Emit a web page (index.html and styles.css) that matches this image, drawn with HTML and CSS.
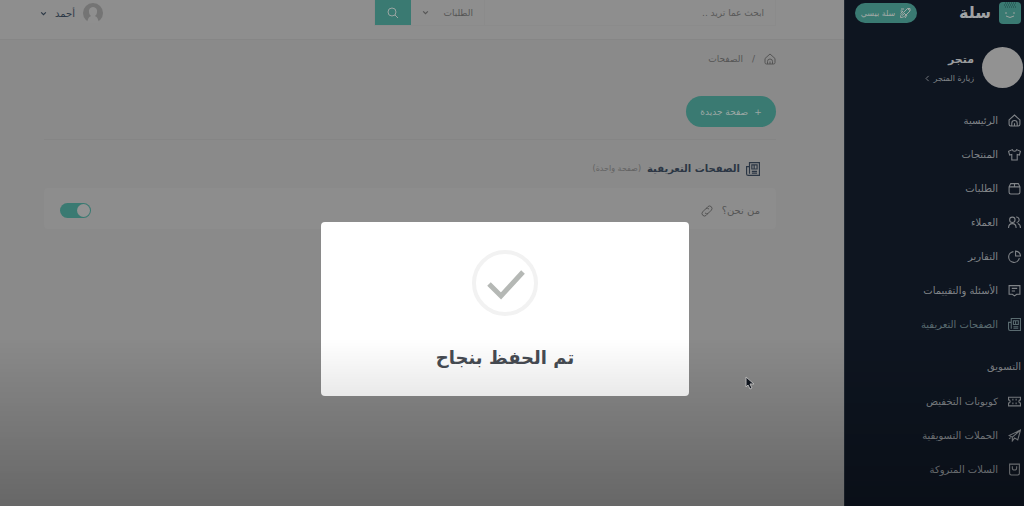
FILE: index.html
```
<!DOCTYPE html>
<html lang="ar" dir="rtl">
<head>
    <meta charset="UTF-8">
    <meta name="viewport" content="width=device-width, initial-scale=1.0">
    <title>الصفحات التعريفية</title>
    <link rel="stylesheet" href="styles.css">
</head>
<body>
    <!-- Shared icons -->
    <svg class="sprite" aria-hidden="true">
        <symbol id="home" viewBox="0 0 24 24"><path d="M2 11 12 2l10 9v8a3 3 0 0 1-3 3H5a3 3 0 0 1-3-3zM7 22v-5a5 5 0 0 1 10 0v5M12 17v5"/></symbol>
        <symbol id="pages" viewBox="0 0 24 24"><path d="M6 1h17v22H4a3 3 0 0 1-3-3V8h5zM6 8v12M10 5h9v7h-9zM10 16h9M10 19h9M14 5v7"/></symbol>
        <symbol id="chevron" viewBox="0 0 24 24"><path d="m4 8 8 8 8-8"/></symbol>
    </svg>

    <aside class="sidebar">
        <div class="brand">
            <svg class="brand-icon" viewBox="0 0 22 22"><rect width="22" height="22" rx="4" fill="#3a7a72"/><path d="M6 1h11M5 3h11M6 5h11" stroke="#1c4a48" stroke-width="1" stroke-dasharray="1 1"/><path d="M6 11h2M14 11h2M7 14q4 3 8 0" fill="none" stroke="#9aa39f" stroke-width="1"/></svg>
            <span class="brand-name">سلة</span>
            <button class="plan" type="button">
                <svg class="plan-icon" viewBox="0 0 24 24"><path d="M3 21c0-6 3-8 6-10l8-8h5v5l-8 8c-3 3-6 5-11 5zM9 11l5 5M3 13l5-5M16 16l-4 6M17 3l4 4M6 17l4-3M4 4h6M3 8h4"/></svg>
                سلة بيسي
            </button>
        </div>
        <div class="store">
            <div class="store-logo"></div>
            <div>
                <div class="store-name">متجر</div>
                <a class="store-link" href="#">زيارة المتجر <svg class="arrow" viewBox="0 0 24 24"><path d="m16 3-9 9 9 9"/></svg></a>
            </div>
        </div>
        <nav class="menu">
            <a href="#"><svg><use href="#home"/></svg>الرئيسية</a>
            <a href="#"><svg viewBox="0 0 24 24"><path d="M8 3 1 6l2 7 4-1v10h10V12l4 1 2-7-7-3c-1 4-7 4-8 0z"/></svg>المنتجات</a>
            <a href="#"><svg viewBox="0 0 24 24"><path d="M5 3h14l3 6v10a3 3 0 0 1-3 3H5a3 3 0 0 1-3-3V9zM2 9h20M12 3v6"/></svg>الطلبات</a>
            <a href="#"><svg viewBox="0 0 24 24"><circle cx="8" cy="7" r="5"/><path d="M15 2a5 5 0 0 1 1 10M1 22c0-5 3-8 7-8s7 3 7 8M18 14c3 1 5 4 5 8"/></svg>العملاء</a>
            <a href="#"><svg viewBox="0 0 24 24"><path d="M10 3a10 10 0 1 0 11 12M14 2v9h9c0-5-4-9-9-9z"/></svg>التقارير</a>
            <a href="#"><svg viewBox="0 0 24 24"><path d="M2 3h20v16h-6l-4 3-4-3H2zM7 8h10M7 13h6"/></svg>الأسئلة والتقييمات</a>
            <a class="active" href="#"><svg><use href="#pages"/></svg>الصفحات التعريفية</a>
        </nav>
        <h2 class="menu-title">التسويق</h2>
        <nav class="menu">
            <a href="#"><svg viewBox="0 0 24 24"><path d="M1 4h22v5a3 3 0 0 0 0 6v5H1v-5a3 3 0 0 0 0-6zM9 7v3M9 14v3M15 7v3M15 14v3"/></svg>كوبونات التخفيض</a>
            <a href="#"><svg viewBox="0 0 24 24"><path d="M23 2 2 12l6 3L23 2l-5 18-7-4M8 15v7l4-5M2 18l3-2"/></svg>الحملات التسويقية</a>
            <a href="#"><svg viewBox="0 0 24 24"><path d="M3 2h18v17a3 3 0 0 1-3 3H6a3 3 0 0 1-3-3zM8 6v3a4 4 0 0 0 8 0V6"/></svg>السلات المتروكة</a>
        </nav>
    </aside>

    <div class="page">
        <header class="topbar">
            <form class="search">
                <input type="text" aria-label="بحث" placeholder="ابحث عما تريد ..">
                <div class="search-type">
                    <select aria-label="نوع البحث">
                        <option>الطلبات</option>
                    </select>
                    <svg class="chevron"><use href="#chevron"/></svg>
                </div>
                <button type="button" aria-label="ابحث">
                    <svg viewBox="0 0 24 24"><circle cx="10" cy="10" r="8"/><path d="m16 16 6 6"/></svg>
                </button>
            </form>
            <button class="user" type="button">
                <svg class="user-photo" viewBox="0 0 20 20"><circle cx="10" cy="10" r="10" fill="#747474"/><path d="M10 4a4 4 0 0 0-4 5c0 2 1 3 2 4-2 1-3 2-4 7h12c-1-5-2-6-4-7 1-1 2-2 2-4a4 4 0 0 0-4-5z" fill="#8f8f8f"/></svg>
                أحمد
                <svg class="chevron"><use href="#chevron"/></svg>
            </button>
        </header>

        <main class="content">
            <nav class="breadcrumb">
                <a href="#" aria-label="الرئيسية"><svg><use href="#home"/></svg></a>
                <span>/</span>
                <span>الصفحات</span>
            </nav>
            <button class="new-page" type="button"><span>+</span> صفحة جديدة</button>

            <section class="card">
                <div class="card-header">
                    <svg><use href="#pages"/></svg>
                    <h1>الصفحات التعريفية</h1>
                    <small>(صفحة واحدة)</small>
                </div>
                <div class="card-row">
                    <label for="about">من نحن؟</label>
                    <svg viewBox="0 0 24 24"><path d="m10 7 4-4a5 5 0 0 1 7 7l-6 6a5 5 0 0 1-7 0M14 17l-4 4a5 5 0 0 1-7-7l6-6a5 5 0 0 1 7 0"/></svg>
                    <input class="switch" id="about" type="checkbox" checked>
                </div>
            </section>
        </main>
    </div>

    <div class="overlay">
        <div class="modal" role="dialog" aria-labelledby="saved">
            <svg class="check" viewBox="0 0 66 66"><circle cx="33" cy="33" r="31" stroke="#f2f2f2" stroke-width="4"/><path d="m17 34 12 12 22-24" stroke="#b5b8b5" stroke-width="5"/></svg>
            <h2 id="saved">تم الحفظ بنجاح</h2>
        </div>
    </div>
    <div class="shade"></div>
    <svg class="cursor" viewBox="0 0 10 14"><path d="M1 1v10l2-2 2 4 2-1-2-4h4z" fill="#10151e" stroke="#b5b5b5" stroke-width="1"/></svg>
</body>
</html>
```
FILE: styles.css
```
* {
    box-sizing: border-box;
}
body {
    margin: 0;
    height: 100vh;
    display: flex;
    overflow: hidden;
    background: #8a8a8a;
    color: #555;
    font-family: "DejaVu Sans", sans-serif;
    font-size: 10px;
}
svg {
    width: 12px;
    height: 12px;
    flex: none;
    fill: none;
    stroke: currentColor;
    stroke-width: 2;
}
a {
    color: inherit;
    text-decoration: none;
}
button, input, select {
    font: inherit;
    color: inherit;
    border: none;
    background: none;
    padding: 0;
    margin: 0;
}
h1, h2 {
    margin: 0;
}
.sprite {
    display: none;
}

/* Sidebar */
.sidebar {
    width: 180px;
    flex: none;
    padding: 2px 3px 0 10px;
    background: #0e1520;
    border-left: 1px solid #202832;
    color: #808488;
}
.brand {
    display: flex;
    align-items: center;
    gap: 8px;
    height: 22px;
}
.brand-icon {
    width: 22px;
    height: 22px;
    stroke: none;
}
.brand-name {
    font-size: 16px;
    font-weight: bold;
    line-height: 22px;
    color: #a0a2a4;
}
.plan {
    display: flex;
    align-items: center;
    justify-content: center;
    gap: 4px;
    width: 62px;
    height: 20px;
    margin-right: auto;
    border-radius: 10px;
    background: #3a7a72;
    color: #a3aaa7;
    font-size: 8px;
    white-space: nowrap;
}
.store {
    display: flex;
    align-items: center;
    gap: 8px;
    margin: 23px 0 15px;
}
.store-logo {
    width: 41px;
    height: 41px;
    margin-right: -2px;
    border-radius: 50%;
    background: #929292;
}
.store-name {
    padding-top: 2px;
    font-size: 11px;
    font-weight: bold;
    line-height: 20px;
    color: #999b9d;
}
.store-link {
    display: flex;
    align-items: center;
    gap: 3px;
    font-size: 8px;
    line-height: 18px;
}
.arrow {
    width: 7px;
    height: 7px;
    stroke-width: 3;
}
.menu a {
    display: flex;
    align-items: center;
    gap: 10px;
    height: 34px;
    white-space: nowrap;
}
.menu svg {
    width: 13px;
    height: 13px;
}
.menu .active {
    color: #5a6b70;
}
.menu-title {
    padding: 17px 0 8px;
    font-size: 10px;
    font-weight: normal;
    line-height: 18px;
}

/* Top bar */
.page {
    flex: 1;
    min-width: 0;
}
.topbar {
    display: flex;
    justify-content: space-between;
    align-items: flex-start;
    height: 40px;
    padding: 0 68px 0 40px;
    background: #8e8e8e;
    border-bottom: 1px solid #868686;
}
.search {
    display: flex;
    width: 402px;
    height: 26px;
    border: 1px solid #8b8b8b;
    border-top: none;
}
.search input {
    flex: 1;
    min-width: 0;
    padding: 0 11px;
    font-size: 9px;
}
.search input::placeholder {
    color: #585858;
    opacity: 1;
}
.search-type {
    display: flex;
    align-items: center;
    justify-content: space-between;
    width: 74px;
    padding: 0 11px;
    border-right: 1px solid #8b8b8b;
    font-size: 9px;
}
.search-type select {
    appearance: none;
}
.search button {
    display: flex;
    align-items: center;
    justify-content: center;
    width: 36px;
    background: #3a7a72;
    color: #9aa5a2;
}
.chevron {
    width: 7px;
    height: 7px;
    stroke-width: 4;
}
.user {
    display: flex;
    align-items: center;
    gap: 8px;
    height: 26px;
    color: #2c3846;
}
.user-photo {
    width: 20px;
    height: 20px;
    stroke: none;
}

/* Content */
.content {
    padding: 9px 68px 0 44px;
}
.breadcrumb {
    display: flex;
    align-items: center;
    gap: 9px;
    height: 20px;
    font-size: 9px;
}
.breadcrumb a {
    display: flex;
}
.new-page {
    display: flex;
    align-items: center;
    justify-content: center;
    gap: 6px;
    width: 90px;
    height: 31px;
    margin: 27px 0 12px;
    border-radius: 16px;
    background: #3a7a72;
    color: #9ca8a5;
    font-size: 9px;
    white-space: nowrap;
}
.card {
    border-top: 1px solid #858585;
    padding-top: 9px;
}
.card-header, .card-row {
    display: flex;
    align-items: center;
    height: 39px;
    padding: 0 16px;
}
.card-header {
    gap: 6px;
    color: #2b3644;
}
.card-header svg {
    width: 14px;
    height: 14px;
}
.card-header h1 {
    font-size: 10px;
}
.card-header small {
    font-size: 8px;
    color: #626262;
}
.card-row {
    gap: 9px;
    height: 41px;
    border-radius: 4px;
    background: #8d8d8d;
    padding-top: 4px;
}
.switch {
    appearance: none;
    width: 31px;
    height: 15px;
    margin-right: auto;
    padding: 1px;
    border-radius: 8px;
    background: #3a7a72;
}
.switch::before {
    content: "";
    display: block;
    width: 13px;
    height: 13px;
    margin-right: auto;
    border-radius: 50%;
    background: #939393;
}
.switch:checked::before {
    margin-right: 0;
}

/* Success message */
.overlay {
    position: fixed;
    inset: 0;
    display: flex;
    align-items: center;
    justify-content: center;
    padding: 112px 14px 0 0;
}
.modal {
    width: 368px;
    padding: 28px 20px 22px;
    border-radius: 4px;
    background: #fff;
    text-align: center;
}
.check {
    display: block;
    width: 66px;
    height: 66px;
    margin: 0 auto 26px;
}
.modal h2 {
    font-size: 18px;
    line-height: 32px;
    color: #474c53;
}
.shade {
    position: fixed;
    inset: auto 0 0 0;
    height: 33vh;
    background: linear-gradient(rgba(0, 0, 0, 0), rgba(0, 0, 0, 0.25));
    pointer-events: none;
}
.cursor {
    position: fixed;
    left: 745px;
    top: 376px;
    width: 10px;
    height: 14px;
}
```
